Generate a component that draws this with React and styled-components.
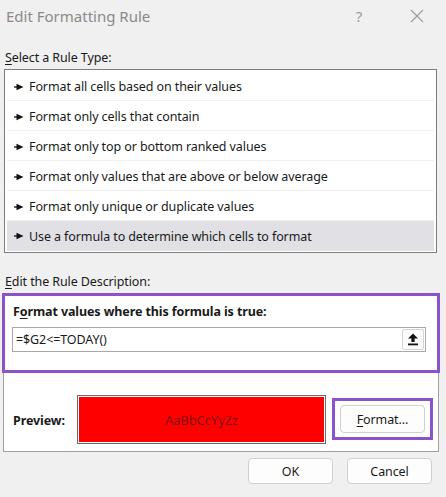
import React from "react";
import styled, { createGlobalStyle } from "styled-components";

const GlobalStyle = createGlobalStyle`
  html, body {
    margin: 0;
    padding: 0;
    background: #f0f0f0;
  }
  body {
    font-family: "Noto Sans", "Open Sans", sans-serif;
    color: #1a1a1a;
    letter-spacing: -0.1px;
  }
`;

const purple = "#8b52c9";

const Dialog = styled.div`
  width: 446px;
  height: 497px;
  box-sizing: border-box;
  background: #f0f0f0;
  display: flex;
  flex-direction: column;
  overflow: hidden;
`;

const TitleBar = styled.div`
  height: 32px;
  display: flex;
  align-items: center;
  padding: 0 0 0 6px;
`;

const Title = styled.div`
  flex: 1;
  font-size: 15px;
  color: #8a8a8a;
  letter-spacing: 0;
`;

const TitleButton = styled.div`
  width: 58px;
  display: flex;
  justify-content: center;
  color: #9a9a9a;
  font-size: 15px;
`;

const SectionLabel = styled.div`
  font-size: 12.5px;
  padding-left: 5px;
  height: ${props => props.h}px;
  display: flex;
  align-items: flex-end;
  padding-bottom: ${props => props.pb}px;
  box-sizing: border-box;
`;

const ListBox = styled.div`
  margin: 0 9px 0 4px;
  border: 1px solid #7d7d7d;
  background: #fff;
  padding: 1px 2px;
`;

const RuleRow = styled.div`
  height: 30px;
  display: flex;
  align-items: center;
  gap: 5px;
  padding: 2px 0 0 7px;
  font-size: 12.5px;
  background: ${props => (props.selected ? "#e1e1e5" : "#fff")};
  border-bottom: 1px solid ${props => (props.selected ? "#e1e1e5" : "#f1f1f1")};
  box-sizing: border-box;
  &:last-child {
    border-bottom: none;
    padding-top: 0;
  }
`;

const DescPanel = styled.div`
  margin: 0 7px 0 3px;
  border: 1px solid #a0a0a0;
  border-top: none;
  background: #fff;
  height: 158px;
  display: flex;
  flex-direction: column;
`;

const Highlight = styled.div`
  margin: 0 -2px 0 -2px;
  border: 3px solid ${purple};
  height: 80px;
  box-sizing: border-box;
  padding: 6px 11px 0 7px;
  display: flex;
  flex-direction: column;
  gap: 7px;
`;

const Heading = styled.div`
  font-size: 12.5px;
  font-weight: 700;
  height: 18px;
  display: flex;
  align-items: center;
  padding-left: 1px;
`;

const FormulaInput = styled.div`
  height: 25px;
  box-sizing: border-box;
  border: 1px solid #a8a8a8;
  display: flex;
  align-items: center;
  justify-content: space-between;
  padding: 0 1px 0 3px;
  font-size: 12.5px;
`;

const RefButton = styled.div`
  width: 22px;
  height: 21px;
  box-sizing: border-box;
  border: 1px solid #d4d4d4;
  border-radius: 2px;
  background: #fbfbfb;
  display: flex;
  align-items: center;
  justify-content: center;
`;

const PreviewRow = styled.div`
  display: flex;
  align-items: flex-start;
  padding: 22px 5px 0 9px;
`;

const PreviewLabel = styled.div`
  width: 64px;
  height: 49px;
  padding-top: 2px;
  box-sizing: border-box;
  display: flex;
  align-items: center;
  font-size: 12.5px;
  font-weight: 700;
`;

const Swatch = styled.div`
  width: 249px;
  height: 49px;
  box-sizing: border-box;
  border: 1px solid #6a6a6a;
  padding: 1px;
  background: #fff;
  margin-right: 6px;
`;

const SwatchFill = styled.div`
  height: 100%;
  background: #ff0000;
  display: flex;
  align-items: center;
  justify-content: center;
  font-size: 13px;
  color: #7e1414;
`;

const ButtonHighlight = styled.div`
  border: 3px solid ${purple};
  padding: 4px 5px;
  margin-top: 3px;
`;

const Button = styled.div`
  width: ${props => props.w}px;
  height: ${props => props.h}px;
  box-sizing: border-box;
  border: 1px solid #d0d0d0;
  border-radius: 4px;
  background: #fdfdfd;
  display: flex;
  align-items: center;
  justify-content: center;
  font-size: 12.5px;
`;

const Footer = styled.div`
  display: flex;
  justify-content: flex-end;
  gap: 14px;
  padding: 6px 14px 0 0;
`;

const U = styled.span`
  text-decoration: underline;
  text-underline-offset: 2px;
`;

function Pointer() {
  return (
    <svg width="10" height="8" viewBox="0 0 10 8">
      <path d="M0 4h4" stroke="#111" strokeWidth="1.3" />
      <path d="M2.5 0.8L9.5 4L2.5 7.2Z" fill="#111" />
    </svg>
  );
}

function UploadIcon() {
  return (
    <svg width="12" height="13" viewBox="0 0 12 13">
      <path d="M6 0.5L11 5.5H7.6V9H4.4V5.5H1Z" fill="#111" />
      <rect x="1" y="10.5" width="10" height="1.8" fill="#111" />
    </svg>
  );
}

function CloseIcon() {
  return (
    <svg width="14" height="14" viewBox="0 0 14 14">
      <path d="M1 1L13 13M13 1L1 13" stroke="#9a9a9a" strokeWidth="1.1" />
    </svg>
  );
}

const rules = [
  "Format all cells based on their values",
  "Format only cells that contain",
  "Format only top or bottom ranked values",
  "Format only values that are above or below average",
  "Format only unique or duplicate values",
  "Use a formula to determine which cells to format",
];

export default function App() {
  return (
    <Dialog>
      <GlobalStyle />
      <TitleBar>
        <Title>Edit Formatting Rule</Title>
        <TitleButton>?</TitleButton>
        <TitleButton>
          <CloseIcon />
        </TitleButton>
      </TitleBar>

      <SectionLabel h={37} pb={3}>
        <span><U>S</U>elect a Rule Type:</span>
      </SectionLabel>
      <ListBox>
        {rules.map((r, i) => (
          <RuleRow key={r} selected={i === rules.length - 1}>
            <Pointer />
            {r}
          </RuleRow>
        ))}
      </ListBox>

      <SectionLabel h={40} pb={3}>
        <span><U>E</U>dit the Rule Description:</span>
      </SectionLabel>
      <DescPanel>
        <Highlight>
          <Heading>
            <span>F<U>o</U>rmat values where this formula is true:</span>
          </Heading>
          <FormulaInput>
            <span>=$G2&lt;=TODAY()</span>
            <RefButton>
              <UploadIcon />
            </RefButton>
          </FormulaInput>
        </Highlight>
        <PreviewRow>
          <PreviewLabel>Preview:</PreviewLabel>
          <Swatch>
            <SwatchFill>AaBbCcYyZz</SwatchFill>
          </Swatch>
          <ButtonHighlight>
            <Button w={85} h={28}>
              <span><U>F</U>ormat...</span>
            </Button>
          </ButtonHighlight>
        </PreviewRow>
      </DescPanel>

      <Footer>
        <Button w={85} h={26}>OK</Button>
        <Button w={85} h={26}>Cancel</Button>
      </Footer>
    </Dialog>
  );
}
